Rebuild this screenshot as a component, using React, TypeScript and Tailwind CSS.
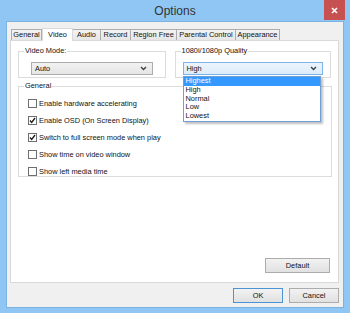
import React from 'react';

const tabs = [
  { label: 'General', w: 'w-[31px]' },
  { label: 'Video', w: 'w-[31px]', active: true },
  { label: 'Audio', w: 'w-[29px]' },
  { label: 'Record', w: 'w-[31px]' },
  { label: 'Region Free', w: 'w-[47px]' },
  { label: 'Parental Control', w: 'w-[60px]' },
  { label: 'Appearance', w: 'w-[45px]' },
];

const checks = [
  { label: 'Enable hardware accelerating', checked: false },
  { label: 'Enable OSD (On Screen Display)', checked: true },
  { label: 'Switch to full screen mode when play', checked: true },
  { label: 'Show time on video window', checked: false },
  { label: 'Show left media time', checked: false },
];

const qualities = ['Highest', 'High', 'Normal', 'Low', 'Lowest'];

const Chevron: React.FC = () => (
  <svg width="7" height="5" viewBox="0 0 7 5" className="shrink-0">
    <path d="M1 1l2.5 2.5L6 1" fill="none" stroke="#404040" strokeWidth="1.4" />
  </svg>
);

const CheckBox: React.FC<{ checked: boolean }> = ({ checked }) => (
  <div className="w-[9px] h-[9px] border border-[#6f6f6f] bg-white flex items-center justify-center shrink-0">
    {checked && (
      <svg width="7" height="7" viewBox="0 0 7 7">
        <path d="M1 3.5l1.7 1.9L6 1" fill="none" stroke="#1a1a1a" strokeWidth="1.3" />
      </svg>
    )}
  </div>
);

const Button: React.FC<{ label: string; primary?: boolean; w: string }> = ({ label, primary, w }) => (
  <div
    className={`${w} h-[15px] flex items-center justify-center border bg-gradient-to-b from-[#f2f2f2] to-[#e1e1e1] ${
      primary ? 'border-[#4a93d4]' : 'border-[#acacac]'
    }`}
  >
    {label}
  </div>
);

export default function App() {
  return (
    <div
      className="w-[350px] h-[313px] bg-[#8fc6f3] flex flex-col text-[7.4px] text-[#111] overflow-hidden"
      style={{ fontFamily: '"Liberation Sans", Arial, sans-serif' }}
    >
      {/* title bar */}
      <div className="relative h-[21px] shrink-0 flex items-center justify-center">
        <span className="text-[12px] text-[#333] pt-[1px]">Options</span>
        <div className="absolute right-[5px] top-0 w-[21px] h-[20px] bg-[#c75050] flex items-center justify-center">
          <svg width="7" height="7" viewBox="0 0 7 7">
            <path d="M1 1l5 5M6 1l-5 5" stroke="#fff" strokeWidth="1.6" />
          </svg>
        </div>
      </div>

      {/* client */}
      <div className="mx-[6px] h-[287px] border border-[#7cb2e2] bg-[#f0f0f0] flex flex-col pl-[3px] pr-[3px]">
        {/* tab strip */}
        <div className="flex items-end h-[18px] pl-[1px] shrink-0">
          {tabs.map(t =>
            t.active ? (
              <div
                key={t.label}
                className={`${t.w} h-[13px] -mb-[1px] relative z-10 bg-white border border-b-0 border-[#d9d9d9] flex items-center justify-center whitespace-nowrap`}
              >
                {t.label}
              </div>
            ) : (
              <div
                key={t.label}
                className={`${t.w} h-[11px] bg-gradient-to-b from-[#f3f3f3] to-[#e6e6e6] border border-b-0 border-[#acacac] flex items-center justify-center whitespace-nowrap -ml-[1px] first:ml-0`}
              >
                {t.label}
              </div>
            )
          )}
        </div>

        {/* panel */}
        <div className="w-[329px] h-[243px] bg-white border border-[#d9d9d9] flex flex-col pt-[6px] px-[7px]">
          <div className="flex gap-[9px]">
            <fieldset className="w-[148px] h-[31px] border border-[#dcdcdc]">
              <legend className="ml-[5px] px-[1px] leading-[8px]">Video Mode:</legend>
              <div className="mt-[7px] mx-[12px] h-[13px] border border-[#acacac] bg-gradient-to-b from-[#f2f2f2] to-[#e5e5e5] flex items-center justify-between pl-[3px] pr-[5px]">
                <span>Auto</span>
                <Chevron />
              </div>
            </fieldset>
            <fieldset className="relative w-[157px] h-[31px] border border-[#dcdcdc]">
              <legend className="ml-[5px] px-[1px] leading-[8px]">1080i/1080p Quality</legend>
              <div className="mt-[7px] mx-[7px] h-[13px] border border-[#7eb4ea] bg-gradient-to-b from-[#ecf4fc] to-[#dcecfc] flex items-center justify-between pl-[3px] pr-[5px]">
                <span>High</span>
                <Chevron />
              </div>
              {/* open dropdown */}
              <div className="absolute left-[7px] top-[21px] w-[138px] border border-[#6f9fd6] bg-white shadow-[2px_2px_2px_rgba(0,0,0,0.25)] z-20">
                {qualities.map((q, i) => (
                  <div
                    key={q}
                    className={`h-[8.8px] leading-[8.8px] pl-[2px] ${i === 0 ? 'bg-[#3399ff] text-white' : ''}`}
                  >
                    {q}
                  </div>
                ))}
              </div>
            </fieldset>
          </div>

          <fieldset className="mt-[4px] w-[314px] h-[95px] border border-[#dcdcdc] pt-[5px]">
            <legend className="ml-[5px] px-[1px] leading-[8px]">General</legend>
            {checks.map(c => (
              <div key={c.label} className="h-[17px] ml-[9px] flex items-center gap-[2px]">
                <CheckBox checked={c.checked} />
                <span>{c.label}</span>
              </div>
            ))}
          </fieldset>

          <div className="flex-1" />
          <div className="flex justify-end mb-[9px] pr-[1px]">
            <Button label="Default" w="w-[65px]" />
          </div>
        </div>

        {/* bottom buttons */}
        <div className="flex justify-end gap-[6px] mt-[5px] pr-[1px]">
          <Button label="OK" primary w="w-[50px]" />
          <Button label="Cancel" w="w-[50px]" />
        </div>
      </div>
    </div>
  );
}
